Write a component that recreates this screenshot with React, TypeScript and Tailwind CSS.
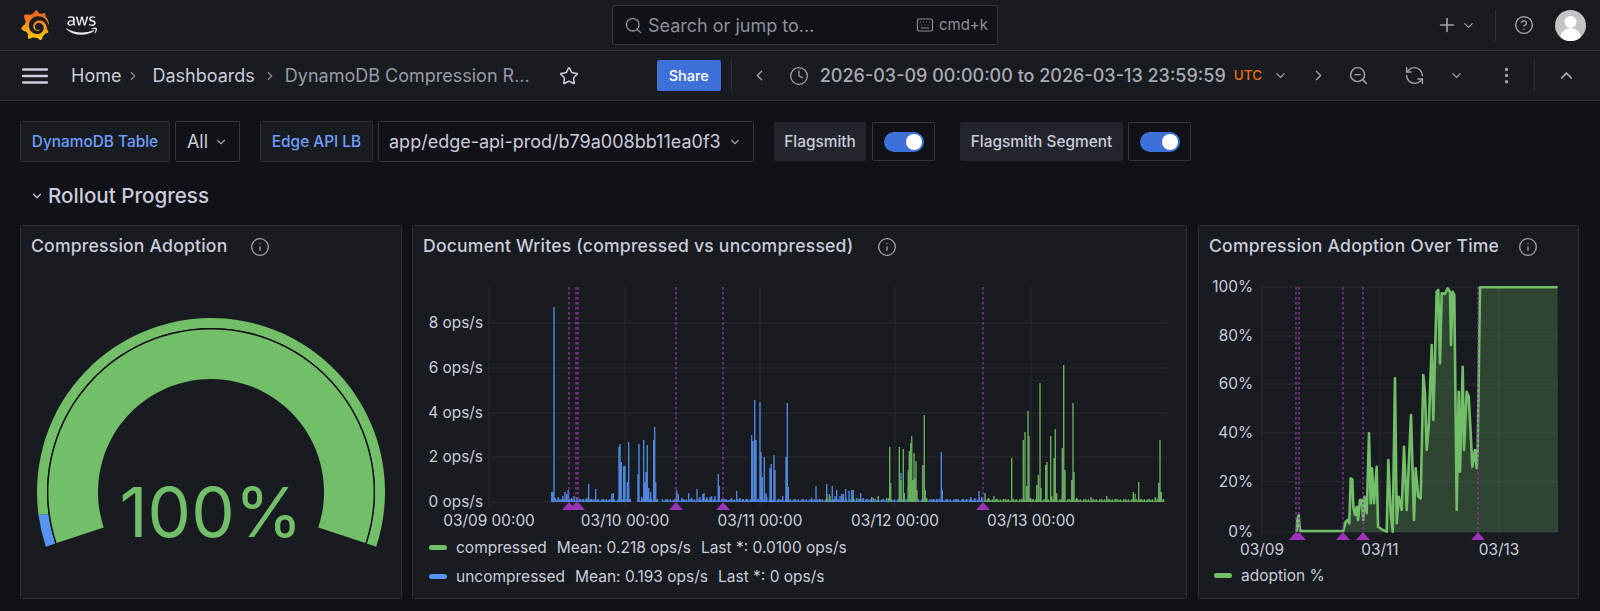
import { ChevronDown, ChevronLeft, ChevronRight, ChevronUp, CircleHelp, Clock, EllipsisVertical, Info, Keyboard, Plus, RefreshCcw, Search, Star, ZoomOut } from "lucide-react";
import { SiGrafana } from "react-icons/si";
import { FaAws } from "react-icons/fa";

// spikes read off the chart: [x, height above the baseline]
const blueLeft = [[425,10],[428,10],[432,195],[436,4],[445,5],[450,3],[458,6],[465,10],[470,8],[475,12],[485,4],[492,6],[500,5],[510,3],[520,3],[530,4],[536,18],[545,3],[557,13],[565,3],[575,2],[585,2],[595,2],[605,8],[610,9],[627,55],[630,58],[634,40],[641,36],[645,36],[652,20],[656,60],[660,3],[684,28],[687,58],[695,5],[701,62],[704,20],[708,30],[712,57],[716,14],[722,10],[731,62],[734,75],[737,20],[742,3],[800,12],[805,8],[815,4],[825,2],[836,9],[845,4],[861,13],[870,5],[878,8],[882,9],[890,5],[900,5],[905,6],[915,6],[925,28],[928,16],[935,3],[945,3],[955,2],[965,4],[980,11],[990,4],[1000,3],[1010,3],[1025,67],[1029,61],[1034,102],[1038,62],[1044,3],[1050,100],[1053,50],[1057,25],[1063,45],[1068,9],[1070,5],[1080,34],[1084,38],[1088,2],[1092,47],[1095,32],[1105,2],[1118,6],[1128,45],[1132,99],[1135,15],[1140,2]];
const blueRight = [[35,4],[48,16],[60,3],[80,18],[88,8],[97,16],[105,6],[110,12],[120,6],[125,8],[130,8],[137,13],[147,11],[155,12],[160,12],[170,4],[182,9],[190,4],[200,3],[220,4],[235,5],[260,4],[303,29],[325,15],[400,3],[410,3],[424,50],[427,12],[445,2],[470,3],[490,3],[500,3],[512,5],[525,4],[537,11],[545,5]];
const greenRight = [[80,8],[90,6],[160,5],[180,3],[215,5],[235,6],[265,4],[269,55],[272,19],[298,55],[303,22],[310,53],[313,9],[325,32],[328,51],[332,59],[335,66],[338,22],[342,49],[345,24],[348,41],[351,12],[368,37],[373,87],[376,12],[380,4],[555,9],[565,4],[582,6],[590,3],[610,3],[625,3],[635,44],[648,2],[670,62],[675,70],[680,16],[684,91],[687,66],[692,4],[700,3],[710,17],[715,27],[720,119],[723,14],[737,37],[741,40],[752,66],[755,6],[762,44],[766,73],[770,9],[787,54],[791,137],[795,32],[815,22],[819,99],[822,30],[830,4],[873,5],[920,6],[945,3],[1000,10],[1005,8],[1016,20],[1020,2],[1040,2],[1066,5],[1076,19],[1080,62],[1084,10],[1090,3]];

const adoption = [[350,935],[352,900],[356,885],[359,925],[362,933],[490,933],[497,905],[503,900],[508,910],[512,775],[517,778],[520,860],[525,885],[530,860],[534,900],[540,840],[545,840],[550,900],[553,830],[560,880],[567,640],[572,850],[576,745],[582,850],[590,740],[594,920],[605,928],[620,935],[625,720],[632,880],[638,935],[645,475],[650,910],[656,830],[665,870],[672,680],[680,870],[693,585],[702,900],[707,745],[715,830],[722,835],[730,465],[735,520],[740,690],[746,620],[755,375],[760,600],[770,215],[775,210],[780,430],[785,220],[795,222],[803,205],[810,215],[813,375],[818,215],[823,225],[830,870],[836,515],[840,755],[848,440],[852,690],[860,515],[866,530],[872,640],[877,740],[885,690],[890,745],[893,690],[900,202],[1133,202]];

const BASE = 502;
const spikes = (pts: number[][], x0: number) => pts.map(([x, h]) => `M${(x0 + x / 3).toFixed(1)} ${BASE}V${BASE - h}`).join("");

function noise(from: number, to: number, skip: number[][] = []) {
  let d = "";
  for (let x = from, i = 0; x < to; x += 1.6, i++) {
    if (skip.some(([a, b]) => x > a && x < b)) continue;
    d += `M${x.toFixed(1)} ${BASE}V${BASE - 1.5 - ((i * 7) % 5) * 0.45}`;
  }
  return d;
}

function Marker({ x, y, top }: { x: number; y: number; top: number }) {
  return (
    <g>
      <path d={`M${x} ${top}V${y}`} stroke="#9c33b8" strokeWidth="1.3" strokeDasharray="2.5 2.5" />
      <path d={`M${x - 7} ${y + 8}L${x} ${y}L${x + 7} ${y + 8}Z`} fill="#9c33b8" />
    </g>
  );
}

function DocumentWritesChart() {
  const ticks = [
    { y: 323, label: "8 ops/s" },
    { y: 368, label: "6 ops/s" },
    { y: 413, label: "4 ops/s" },
    { y: 457, label: "2 ops/s" },
    { y: 502, label: "0 ops/s" },
  ];
  const days = [
    { x: 489, label: "03/09 00:00" },
    { x: 625, label: "03/10 00:00" },
    { x: 760, label: "03/11 00:00" },
    { x: 895, label: "03/12 00:00" },
    { x: 1031, label: "03/13 00:00" },
  ];
  return (
    <svg viewBox="413 270 773 263" className="block w-[773px] h-[263px]">
      {ticks.map((t) => (
        <g key={t.y}>
          <path d={`M489 ${t.y}H1167`} stroke="#2a2c31" />
          <text x="483" y={t.y + 5} textAnchor="end" fontSize="15.4" fill="#ccccdc">{t.label}</text>
        </g>
      ))}
      {days.map((d) => (
        <g key={d.x}>
          <path d={`M${d.x} 287V507`} stroke="#2a2c31" />
          <text x={d.x} y="526" textAnchor="middle" fontSize="15.4" fill="#ccccdc">{d.label}</text>
        </g>
      ))}
      <path d={noise(552, 986, [[631, 637], [658, 661]])} stroke="#4f86dc" strokeWidth="1.4" />
      <path d={spikes(blueLeft, 410)} stroke="#4f86dc" strokeWidth="1.4" />
      <path d={spikes(blueRight, 800)} stroke="#4f86dc" strokeWidth="1.4" />
      <path d={noise(986, 1164)} stroke="#66ab5e" strokeWidth="1.4" />
      <path d={spikes(greenRight, 800)} stroke="#66ab5e" strokeWidth="1.4" />
      <Marker x={569} y={502} top={287} />
      <Marker x={576} y={502} top={287} />
      <Marker x={578} y={502} top={287} />
      <Marker x={676} y={502} top={287} />
      <Marker x={723} y={502} top={287} />
      <Marker x={983} y={502} top={287} />
    </svg>
  );
}

function AdoptionChart() {
  const line = adoption.map(([x, y]) => `${(1180 + x / 3).toFixed(1)} ${(220 + y / 3).toFixed(1)}`).join("L");
  const ticks = [
    { y: 287, label: "100%" },
    { y: 336, label: "80%" },
    { y: 384, label: "60%" },
    { y: 433, label: "40%" },
    { y: 482, label: "20%" },
    { y: 532, label: "0%" },
  ];
  const days = [
    { x: 1262, label: "03/09" },
    { x: 1380, label: "03/11" },
    { x: 1499, label: "03/13" },
  ];
  return (
    <svg viewBox="1199 270 379 292" className="block w-[379px] h-[292px]">
      {ticks.map((t) => (
        <g key={t.y}>
          <path d={`M1262 ${t.y}H1558`} stroke="#2a2c31" />
          <text x="1253" y={t.y + 5} textAnchor="end" fontSize="15.4" fill="#ccccdc">{t.label}</text>
        </g>
      ))}
      {days.map((d) => (
        <g key={d.x}>
          <path d={`M${d.x} 287V537`} stroke="#2a2c31" />
          <text x={d.x} y="555" textAnchor="middle" fontSize="15.4" fill="#ccccdc">{d.label}</text>
        </g>
      ))}
      <path d={`M${line}L1558 532L1296 532Z`} fill="#73bf69" fillOpacity="0.25" />
      <path d={`M${line}`} fill="none" stroke="#73bf69" strokeWidth="2.6" strokeLinejoin="round" />
      {[1296, 1299, 1343, 1363, 1478].map((x) => (
        <Marker key={x} x={x} y={532} top={287} />
      ))}
    </svg>
  );
}

// angles in degrees, 0 = pointing left, growing clockwise over the top
function ring(r1: number, r2: number, a0: number, a1: number) {
  const cx = 211;
  const cy = 492;
  const pt = (r: number, a: number) => {
    const t = (a * Math.PI) / 180;
    return `${(cx - r * Math.cos(t)).toFixed(2)} ${(cy - r * Math.sin(t)).toFixed(2)}`;
  };
  const large = a1 - a0 > 180 ? 1 : 0;
  return `M${pt(r2, a0)}A${r2} ${r2} 0 ${large} 1 ${pt(r2, a1)}L${pt(r1, a1)}A${r1} ${r1} 0 ${large} 0 ${pt(r1, a0)}Z`;
}

function Gauge() {
  return (
    <svg viewBox="21 270 380 328" className="block w-[380px] h-[328px]">
      <path d={ring(164, 174, -7.6, 198.3)} fill="#73bf69" />
      <path d={ring(164, 174, -18.3, -7.6)} fill="#5794f2" />
      <path d={ring(162.6, 164, -18.3, 198.3)} fill="#0c0d10" />
      <path d={ring(113, 162.6, -18.3, 198.3)} fill="#73bf69" />
      <text x="211" y="537" textAnchor="middle" fontSize="69" fill="#73bf69">100%</text>
    </svg>
  );
}

function Panel({ title, titleWidth, width, children }: { title: string; titleWidth: string; width: string; children: React.ReactNode }) {
  return (
    <section className={`${width} h-[374px] shrink-0 bg-[#181b1f] border border-[#2c2e33] rounded-[2px]`}>
      <div className="h-[44px] pl-[10px] pb-[3px] flex items-center text-[#ccccdc]">
        <h2 className={`${titleWidth} text-[17.6px] font-medium tracking-[0.2px] whitespace-nowrap`}>{title}</h2>
        <Info size={20} strokeWidth={1.6} className="text-[#a0a1ab]" />
      </div>
      {children}
    </section>
  );
}

function LegendRow({ color, name, stats }: { color: string; name: string; stats?: string[] }) {
  return (
    <div className="h-[29px] flex items-center text-[15.5px] text-[#ccccdc] whitespace-nowrap">
      <span className={`${color} w-[18px] h-[5px] rounded-full mr-[9px]`} />
      <span>{name}</span>
      {stats?.map((s) => (
        <span key={s} className="ml-[10px]">{s}</span>
      ))}
    </div>
  );
}

function Toggle() {
  return (
    <div className="w-[63px] h-[39px] flex items-center justify-center bg-[#111217] border border-[#34363d] rounded-[2px]">
      <div className="w-[40px] h-[20px] rounded-full bg-[#3d71d9] flex items-center justify-end pr-[2px]">
        <div className="w-[16px] h-[16px] rounded-full bg-white" />
      </div>
    </div>
  );
}

export default function App() {
  return (
    <div className="w-[1600px] h-[611px] overflow-hidden bg-[#111217] text-[#ccccdc] font-[Inter,sans-serif]">
      {/* top bar */}
      <header className="h-[51px] bg-[#181b1f] border-b border-[#2f3136] flex items-center">
        <div className="w-[612px] pl-[20px] flex items-center shrink-0">
          <svg width="0" height="0" className="absolute">
            <defs>
              <linearGradient id="grafanaFill" x1="0" y1="1" x2="0" y2="0">
                <stop offset="0" stopColor="#fbca0a" />
                <stop offset="1" stopColor="#f05a28" />
              </linearGradient>
            </defs>
          </svg>
          <SiGrafana size={30} fill="url(#grafanaFill)" />
          <FaAws size={31} className="ml-[16px] text-[#e8e8ee]" />
        </div>
        <div className="w-[386px] h-[40px] shrink-0 bg-[#111217] border border-[#34363d] rounded-[2px] flex items-center pl-[11px] pr-[9px] text-[#8e8f99]">
          <Search size={19} strokeWidth={1.7} />
          <span className="ml-[5px] text-[18px]">Search or jump to...</span>
          <Keyboard size={18} strokeWidth={1.6} className="ml-auto" />
          <span className="ml-[5px] text-[15px]">cmd+k</span>
        </div>
        <div className="flex-1 flex items-center text-[#a0a1ab]">
          <Plus size={22} strokeWidth={1.8} className="ml-[438px]" />
          <ChevronDown size={15} strokeWidth={2} className="ml-[3px]" />
          <div className="ml-[19px] w-px h-[31px] bg-[#2f3136]" />
          <CircleHelp size={20} strokeWidth={1.7} className="ml-[18px]" />
          <div className="ml-[21px] w-[31px] h-[31px] rounded-full bg-[#c4c4c4] overflow-hidden flex items-end justify-center">
            <svg viewBox="0 0 31 31" className="w-[31px] h-[31px]">
              <circle cx="15.5" cy="12" r="6" fill="#fff" />
              <ellipse cx="15.5" cy="27" rx="10" ry="9" fill="#fff" />
            </svg>
          </div>
        </div>
      </header>

      {/* breadcrumb and time bar */}
      <nav className="h-[50px] bg-[#181b1f] border-b border-[#2f3136] flex items-center text-[18px] whitespace-nowrap">
        <svg width="26" height="16" viewBox="0 0 26 16" className="ml-[22px] shrink-0">
          <path d="M1 1.5H25M1 8H25M1 14.5H25" stroke="#ccccdc" strokeWidth="2.4" strokeLinecap="round" />
        </svg>
        <span className="ml-[23px]">Home</span>
        <ChevronRight size={14} strokeWidth={2} className="ml-[5px] text-[#8e8f99]" />
        <span className="ml-[12px]">Dashboards</span>
        <ChevronRight size={14} strokeWidth={2} className="ml-[8px] text-[#8e8f99]" />
        <span className="ml-[8px] w-[248px] text-[#9a9ba6]">DynamoDB Compression R...</span>
        <Star size={20} strokeWidth={1.8} className="ml-[26px]" />
        <button className="ml-[78px] w-[64px] h-[31px] bg-[#3d71d9] text-white text-[14.5px] font-medium rounded-[2px]">Share</button>
        <div className="ml-[10px] w-px h-[31px] bg-[#2f3136]" />
        <ChevronLeft size={17} strokeWidth={2} className="ml-[19px] text-[#a0a1ab]" />
        <Clock size={20} strokeWidth={1.6} className="ml-[21px] text-[#a0a1ab]" />
        <span className="ml-[11px] text-[#a9aab4] font-medium">2026-03-09 00:00:00 to 2026-03-13 23:59:59</span>
        <span className="ml-[8px] text-[13.5px] font-medium text-[#e8710a]">UTC</span>
        <ChevronDown size={15} strokeWidth={2} className="ml-[11px] text-[#a0a1ab]" />
        <ChevronRight size={17} strokeWidth={2} className="ml-[22px] text-[#a0a1ab]" />
        <ZoomOut size={21} strokeWidth={1.7} className="ml-[21px] text-[#a0a1ab]" />
        <RefreshCcw size={21} strokeWidth={1.7} className="ml-[35px] text-[#a0a1ab]" />
        <ChevronDown size={15} strokeWidth={2} className="ml-[24px] text-[#a0a1ab]" />
        <EllipsisVertical size={21} strokeWidth={2} className="ml-[32px] text-[#a0a1ab]" />
        <div className="ml-[17px] w-px h-[31px] bg-[#2f3136]" />
        <ChevronUp size={19} strokeWidth={2.4} className="ml-[22px] text-[#a0a1ab]" />
      </nav>

      <main className="pl-[20px]">
        {/* dashboard variables */}
        <div className="pt-[20px] flex items-center h-[61px] text-[15.4px] whitespace-nowrap">
          <div className="w-[150px] h-[41px] flex items-center justify-center bg-[#181b1f] border border-[#2c2f36] rounded-[2px] font-medium text-[#6e9fff]">DynamoDB Table</div>
          <div className="ml-[5px] w-[65px] h-[41px] flex items-center justify-center gap-[6px] bg-[#111217] border border-[#34363d] rounded-[2px] text-[18px]">All<ChevronDown size={14} strokeWidth={2} className="text-[#a0a1ab]" /></div>
          <div className="ml-[20px] w-[113px] h-[41px] flex items-center justify-center bg-[#181b1f] border border-[#2c2f36] rounded-[2px] font-medium text-[#6e9fff]">Edge API LB</div>
          <div className="ml-[5px] w-[376px] h-[41px] flex items-center pl-[10px] gap-[7px] bg-[#111217] border border-[#34363d] rounded-[2px] text-[18px]">app/edge-api-prod/b79a008bb11ea0f3<ChevronDown size={14} strokeWidth={2} className="text-[#a0a1ab]" /></div>
          <div className="ml-[20px] w-[92px] h-[39px] flex items-center justify-center bg-[#22252b] rounded-[2px] font-medium">Flagsmith</div>
          <div className="ml-[6px]"><Toggle /></div>
          <div className="ml-[25px] w-[163px] h-[39px] flex items-center justify-center bg-[#22252b] rounded-[2px] font-medium">Flagsmith Segment</div>
          <div className="ml-[5px]"><Toggle /></div>
        </div>

        {/* row title */}
        <div className="mt-[20px] h-[28px] flex items-center">
          <ChevronDown size={14} strokeWidth={2} className="ml-[10px] text-[#ccccdc]" />
          <h1 className="ml-[4px] text-[20.6px] font-medium">Rollout Progress</h1>
        </div>

        {/* panels */}
        <div className="mt-[15px] flex gap-[10px]">
          <Panel title="Compression Adoption" titleWidth="w-[219px]" width="w-[382px]">
            <Gauge />
          </Panel>
          <Panel title="Document Writes (compressed vs uncompressed)" titleWidth="w-[454px]" width="w-[775px]">
            <DocumentWritesChart />
            <div className="pl-[16px]">
              <LegendRow color="bg-[#73bf69]" name="compressed" stats={["Mean: 0.218 ops/s", "Last *: 0.0100 ops/s"]} />
              <LegendRow color="bg-[#5794f2]" name="uncompressed" stats={["Mean: 0.193 ops/s", "Last *: 0 ops/s"]} />
            </div>
          </Panel>
          <Panel title="Compression Adoption Over Time" titleWidth="w-[309px]" width="w-[381px] ml-px">
            <AdoptionChart />
            <div className="pl-[15px] -mt-[1px]">
              <LegendRow color="bg-[#73bf69]" name="adoption %" />
            </div>
          </Panel>
        </div>
      </main>
    </div>
  );
}
